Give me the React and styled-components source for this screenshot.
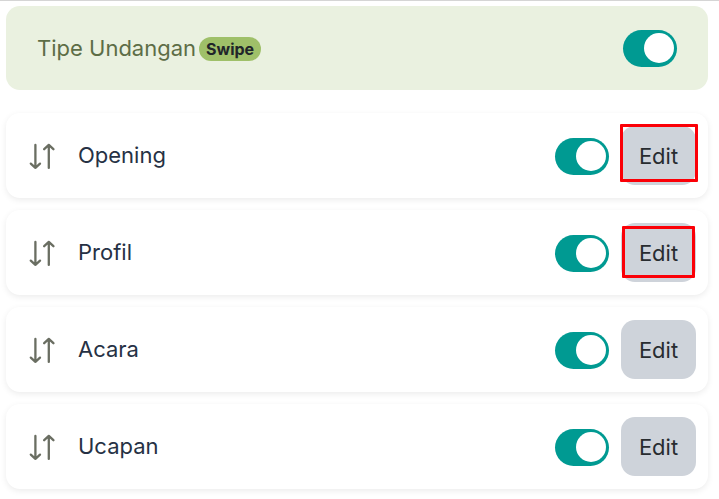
import React from "react";
import styled, { createGlobalStyle } from "styled-components";

const GlobalStyle = createGlobalStyle`
  *, *::before, *::after { box-sizing: border-box; }
  body {
    margin: 0;
    background: #fff;
    font-family: Inter, "Liberation Sans", sans-serif;
    font-size: 22px;
    font-weight: 400;
    line-height: 32px;
  }
`;

const Page = styled.main`
  border-top: 1px solid #d5d5d5;
  padding: 5px 11px 9px 6px;
`;

const TypeBanner = styled.section`
  display: flex;
  align-items: center;
  justify-content: space-between;
  min-height: 84px;
  padding: 0 31px;
  margin-bottom: 23px;
  border-radius: 14px;
  background: #eaf1e0;
  color: #5d6d46;
`;

const BannerLabel = styled.label`
  display: flex;
  align-items: center;
  gap: 3px;
`;

const Badge = styled.span`
  margin-top: 2px;
  padding: 0 7px;
  border-radius: 12px;
  background: #9fc069;
  color: #212529;
  font-size: 16px;
  font-weight: 700;
  line-height: 24px;
`;

const Switch = styled.input.attrs({ type: "checkbox", role: "switch" })`
  appearance: none;
  flex: none;
  display: flex;
  align-items: center;
  width: 54px;
  height: 37px;
  margin: 0;
  padding: 0 3px;
  border-radius: 19px;
  background: #c4c9d0;
  cursor: pointer;

  &::before {
    content: "";
    width: 30px;
    height: 30px;
    border-radius: 50%;
    background: #fff;
  }

  &:checked {
    justify-content: flex-end;
    background: #009a92;
  }
`;

const SectionList = styled.ul`
  display: grid;
  gap: 12px;
  margin: 0;
  padding: 0;
  list-style: none;
`;

const SectionCard = styled.li`
  display: flex;
  align-items: center;
  min-height: 85px;
  padding: 1px 12px 0 23px;
  border-radius: 14px;
  background: #fff;
  box-shadow: 0 2px 6px rgba(0, 0, 0, 0.08);
`;

const DragHandle = styled.button`
  display: flex;
  margin: 0 23px 0 0;
  padding: 0;
  border: 0;
  background: none;
  color: #6a6e62;
  cursor: grab;
`;

const SectionName = styled.label`
  flex: 1;
  padding-bottom: 3px;
  color: #263144;
`;

const EditArea = styled.div`
  position: relative;
  margin: 0 0 1px 12px;
`;

const EditButton = styled.button`
  display: block;
  width: 75px;
  height: 59px;
  padding: 0;
  border: 0;
  border-radius: 14px;
  background: #ced3da;
  color: #282c30;
  font: inherit;
  cursor: pointer;
`;

const Highlight = styled.span`
  position: absolute;
  inset: ${({ $inset }) => $inset};
  border: 3px solid #fb0007;
  border-radius: 1px;
  pointer-events: none;
`;

const SortIcon = () => (
  <svg
    width="26"
    height="28"
    viewBox="0 0 26 28"
    fill="none"
    stroke="currentColor"
    strokeWidth="2.3"
    strokeLinecap="round"
    strokeLinejoin="round"
    aria-hidden="true"
  >
    <path d="M6.4 2.9V25.9M1.8 21.6L6.4 25.9L11 21.6" />
    <path d="M19.8 25.9V2.9M15.2 7.2L19.8 2.9L24.4 7.2" />
  </svg>
);

const sections = [
  { id: "opening", name: "Opening", highlight: "-2px -2px 3px -1px" },
  { id: "profil", name: "Profil", highlight: "3px 1px 4px 1px" },
  { id: "acara", name: "Acara" },
  { id: "ucapan", name: "Ucapan" },
];

export default function App() {
  return (
    <>
      <GlobalStyle />
      <Page>
        <TypeBanner>
          <BannerLabel htmlFor="type">
            Tipe Undangan <Badge>Swipe</Badge>
          </BannerLabel>
          <Switch id="type" defaultChecked />
        </TypeBanner>
        <SectionList>
          {sections.map(({ id, name, highlight }) => (
            <SectionCard key={id}>
              <DragHandle type="button" aria-label={name}>
                <SortIcon />
              </DragHandle>
              <SectionName htmlFor={id}>{name}</SectionName>
              <Switch id={id} defaultChecked />
              <EditArea>
                <EditButton type="button">Edit</EditButton>
                {highlight && <Highlight $inset={highlight} />}
              </EditArea>
            </SectionCard>
          ))}
        </SectionList>
      </Page>
    </>
  );
}
